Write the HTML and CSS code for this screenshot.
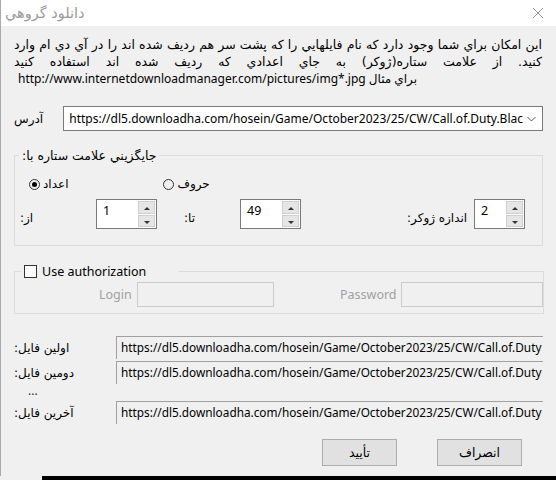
FILE: index.html
```html
<!DOCTYPE html>
<html lang="fa">
<head>
  <meta charset="UTF-8">
  <title>دانلود گروهي</title>
  <link rel="stylesheet" href="styles.css">
</head>
<body>
  <div class="window">
    <div class="titlebar">
      <span class="title">دانلود گروهي</span>
      <svg class="close" width="12" height="12" viewBox="0 0 12 12">
        <path d="M1 1L11 11M11 1L1 11" stroke="#9a9a9a" stroke-width="1" fill="none"/>
      </svg>
    </div>

    <div class="content">
      <div class="intro">
        <p class="line" dir="rtl">اين امكان براي شما وجود دارد كه نام فايلهايي را كه پشت سر هم رديف شده اند را در آي دي ام وارد</p>
        <p class="line" dir="rtl">كنيد. از علامت ستاره(ژوكر) به جاي اعدادي كه رديف شده اند استفاده كنيد</p>
        <p class="line last" dir="ltr">http://www.internetdownloadmanager.com/pictures/img*.jpg براي مثال</p>
      </div>

      <div class="address">
        <span class="fa" dir="rtl">آدرس</span>
        <div class="combo">
          <span class="combo-text">https://dl5.downloadha.com/hosein/Game/October2023/25/CW/Call.of.Duty.Blac</span>
          <svg class="combo-arrow" width="9" height="6" viewBox="0 0 9 6">
            <path d="M0.5 1L4.5 5L8.5 1" stroke="#555" fill="none"/>
          </svg>
        </div>
      </div>

      <fieldset class="group wildcard">
        <legend class="fa" dir="rtl">جايگزيني علامت ستاره با:</legend>
        <div class="radios">
          <label class="radio"><span class="dot checked"></span><span class="fa" dir="rtl">اعداد</span></label>
          <label class="radio"><span class="dot"></span><span class="fa" dir="rtl">حروف</span></label>
        </div>
        <div class="ranges">
          <span class="fa lbl-from" dir="rtl">از:</span>
          <div class="spin s-from"><span class="spin-val">1</span><div class="spin-btns"><span class="up"></span><span class="down"></span></div></div>
          <span class="fa lbl-to" dir="rtl">تا:</span>
          <div class="spin s-to"><span class="spin-val">49</span><div class="spin-btns"><span class="up"></span><span class="down"></span></div></div>
          <span class="fa lbl-size" dir="rtl">اندازه ژوكر:</span>
          <div class="spin s-size"><span class="spin-val">2</span><div class="spin-btns"><span class="up"></span><span class="down"></span></div></div>
        </div>
      </fieldset>

      <fieldset class="group auth">
        <legend><span class="check"></span>Use authorization</legend>
        <div class="auth-row">
          <span class="muted lbl-login">Login</span>
          <span class="field f-login"></span>
          <span class="muted lbl-pass">Password</span>
          <span class="field f-pass"></span>
        </div>
      </fieldset>

      <div class="files">
        <div class="file-row">
          <span class="fa" dir="rtl">اولين فايل:</span>
          <div class="file-field">https://dl5.downloadha.com/hosein/Game/October2023/25/CW/Call.of.Duty</div>
        </div>
        <div class="file-row">
          <span class="fa" dir="rtl">دومين فايل:</span>
          <div class="file-field">https://dl5.downloadha.com/hosein/Game/October2023/25/CW/Call.of.Duty</div>
        </div>
        <div class="dots">...</div>
        <div class="file-row">
          <span class="fa" dir="rtl">آخرين فايل:</span>
          <div class="file-field">https://dl5.downloadha.com/hosein/Game/October2023/25/CW/Call.of.Duty</div>
        </div>
      </div>

      <div class="buttons">
        <button class="btn ok" dir="rtl">تأييد</button>
        <button class="btn cancel" dir="rtl">انصراف</button>
      </div>
    </div>
  </div>
  <div class="taskbar"></div>
</body>
</html>
```

FILE: styles.css
```css
body {
  margin: 0;
  width: 556px;
  height: 480px;
  overflow: hidden;
  background: #f0f0f0;
  font-family: "Noto Sans", "DejaVu Sans", sans-serif;
  font-size: 12px;
  color: #000;
}

.window {
  height: 476px;
  border-left: 1px solid #aaa;
  box-sizing: border-box;
  background: #f0f0f0;
}

.titlebar {
  height: 26px;
  background: #fff;
  display: flex;
  align-items: center;
  justify-content: space-between;
  padding: 0 12px 0 4px;
}

.title {
  font-family: "DejaVu Sans", sans-serif;
  font-size: 14.5px;
  color: #9a9a9a;
}

.content {
  padding: 10px 13px 0 13px;
}

.fa {
  font-family: "DejaVu Sans", sans-serif;
  font-size: 12px;
}

/* متن راهنما */
.intro .line {
  margin: 0;
  height: 17px;
  line-height: 17px;
  font-family: "DejaVu Sans", sans-serif;
  font-size: 12.5px;
  text-align: justify;
  text-align-last: justify;
  padding-right: 1px;
  white-space: nowrap;
}

.intro .last {
  text-align: left;
  text-align-last: left;
  padding-left: 4px;
  font-family: "Noto Sans", "DejaVu Sans", sans-serif;
  font-size: 12px;
}

.address {
  display: flex;
  align-items: center;
  margin-top: 19px;
  height: 25px;
}

.address .fa {
  width: 56px;
  text-align: left;
}

.combo {
  flex: 1;
  height: 25px;
  box-sizing: border-box;
  border: 1px solid #7a7a7a;
  background: #fff;
  display: flex;
  align-items: center;
  padding: 0 6px 0 5px;
}

.combo-text {
  flex: 1;
  white-space: nowrap;
  overflow: hidden;
}

.combo-arrow {
  margin-left: 4px;
}

/* جعبه گروه */
.group {
  margin: 0;
  border: 1px solid #dcdcdc;
  padding: 0;
}

.group legend {
  padding: 0 3px;
  margin-left: 4px;
}

.wildcard {
  margin-top: 17px;
  height: 98px;
  box-sizing: border-box;
}

.wildcard legend {
  font-size: 12.5px;
}

.radios {
  display: flex;
  gap: 95px;
  padding: 10px 0 0 14px;
  height: 22px;
  align-items: center;
}

.radio {
  display: flex;
  align-items: center;
  gap: 3px;
}

.dot {
  width: 11px;
  height: 11px;
  border: 1px solid #333;
  border-radius: 50%;
  box-sizing: border-box;
  position: relative;
}

.dot.checked::after {
  content: "";
  position: absolute;
  left: 2px;
  top: 2px;
  width: 5px;
  height: 5px;
  border-radius: 50%;
  background: #000;
}

.ranges {
  display: flex;
  align-items: flex-start;
  height: 30px;
  margin-top: 4px;
  padding-left: 5px;
}

.ranges .fa {
  margin-top: 12px;
  text-align: left;
}

.lbl-from { width: 76px; }
.lbl-to { margin-left: 27px; width: 56px; }
.lbl-size { margin-left: 106px; width: 66px; }

.spin {
  height: 30px;
  box-sizing: border-box;
  border: 1px solid #7a7a7a;
  background: #fff;
  display: flex;
}

.s-from { width: 61px; }
.s-to { width: 61px; }
.s-size { width: 51px; margin-left: 1px; }

.spin-val {
  flex: 1;
  padding: 2px 0 0 6px;
  font-size: 12.5px;
}

.spin-btns {
  width: 17px;
  display: flex;
  flex-direction: column;
  gap: 1px;
  padding: 1px;
}

.spin-btns span {
  flex: 1;
  background: #e5e5e5;
  border: 1px solid #cfcfcf;
  position: relative;
}

.spin-btns .up::after,
.spin-btns .down::after {
  content: "";
  position: absolute;
  left: 5px;
  top: 5px;
  border-left: 3px solid transparent;
  border-right: 3px solid transparent;
}

.spin-btns .up::after { border-bottom: 3px solid #333; }
.spin-btns .down::after { border-top: 3px solid #333; }

/* احراز هویت */
.auth {
  margin-top: 17px;
  height: 51px;
  box-sizing: border-box;
}

.auth legend {
  display: flex;
  align-items: center;
  gap: 5px;
  margin-left: 6px;
  padding: 0 32px 0 3px;
  font-size: 12.5px;
  font-family: "Noto Sans", sans-serif;
}

.check {
  width: 13px;
  height: 13px;
  border: 1px solid #333;
  box-sizing: border-box;
  background: #fff;
}

.auth-row {
  display: flex;
  align-items: center;
  margin-top: 2px;
  height: 25px;
}

.muted {
  color: #a0a0a0;
  font-size: 12.5px;
}

.lbl-login { margin-left: 84px; width: 38px; }
.lbl-pass { margin-left: 66px; width: 61px; }

.field {
  height: 25px;
  box-sizing: border-box;
  border: 1px solid #cccccc;
}

.f-login { width: 137px; }
.f-pass { width: 142px; }

/* فایل ها */
.files {
  margin-top: 22px;
}

.file-row {
  display: flex;
  align-items: center;
  height: 23px;
  margin-bottom: 2px;
}

.file-row .fa {
  width: 102px;
  text-align: left;
  padding-top: 1px;
}

.file-field {
  flex: 1;
  height: 23px;
  box-sizing: border-box;
  border-top: 1px solid #a0a0a0;
  border-left: 1px solid #a0a0a0;
  background: #f0f0f0;
  padding: 2px 0 0 4px;
  white-space: nowrap;
  font-size: 11.8px;
}

.dots {
  height: 15px;
  line-height: 10px;
  padding-left: 14px;
  color: #333;
}

.buttons {
  display: flex;
  margin-top: 15px;
  padding-left: 308px;
  gap: 40px;
}

.btn {
  height: 27px;
  background: #e1e1e1;
  border: 1px solid #adadad;
  font-family: "DejaVu Sans", sans-serif;
  font-size: 12.5px;
  color: #000;
  padding: 0;
}

.ok { width: 75px; }
.cancel { width: 85px; }

.taskbar {
  height: 4px;
  margin-left: 42px;
  background: #000;
}
```
